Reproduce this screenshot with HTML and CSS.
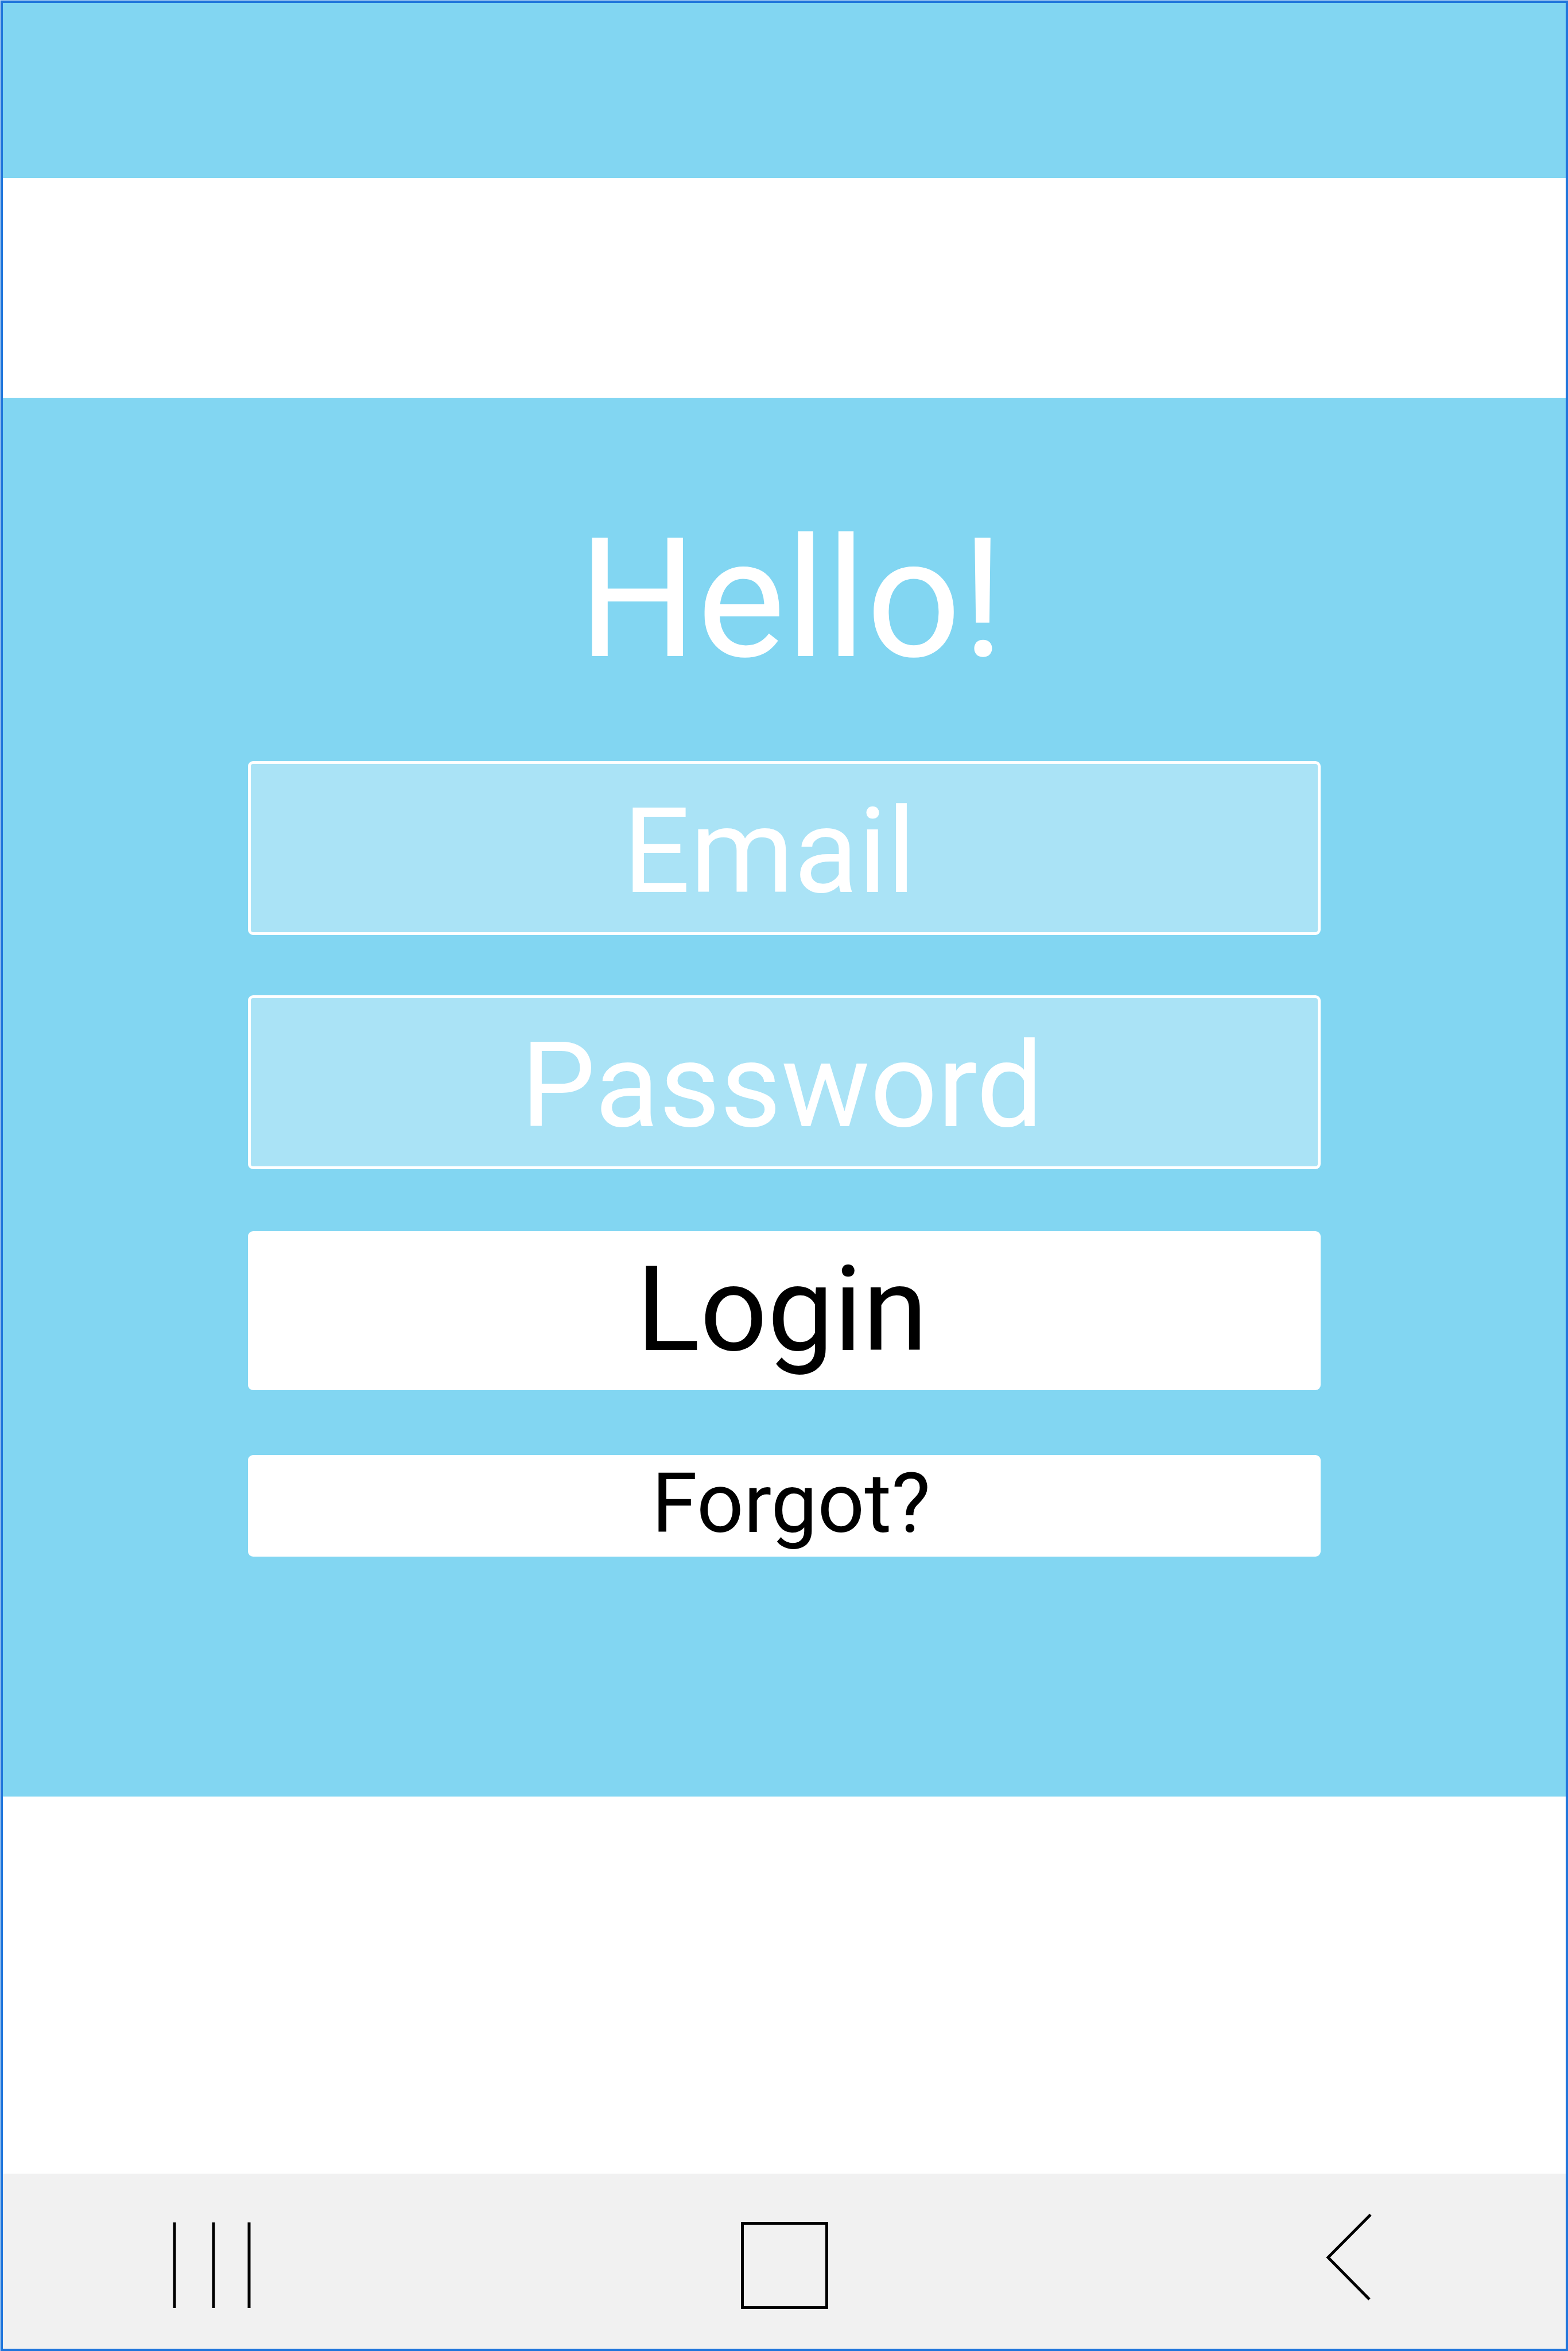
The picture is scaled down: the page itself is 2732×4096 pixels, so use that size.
FILE: index.html
```html
<!DOCTYPE html>
<html lang="en">
<head>
<meta charset="utf-8">
<meta name="viewport" content="width=device-width, initial-scale=1">
<title>Login</title>
<link rel="stylesheet" href="styles.css">
</head>
<body>
<div class="screen">
  <header class="top-bar"></header>
  <main class="panel">
    <h1 class="title">Hello!</h1>
    <form class="login-form">
      <div class="fields">
        <input class="field field-email" type="email" name="email" placeholder="Email" aria-label="Email">
        <input class="field field-password" type="password" name="password" placeholder="Password" aria-label="Password">
      </div>
      <div class="actions">
        <button class="action action-login" type="submit">Login</button>
        <button class="action action-forgot" type="button">Forgot?</button>
      </div>
    </form>
  </main>
  <nav class="nav-bar" aria-label="System">
    <button class="nav-button" type="button" aria-label="Recent apps">
      <svg class="nav-icon" viewBox="0 0 152 180"><path d="M11 22V171M79 22V171M141 22V171"/></svg>
    </button>
    <button class="nav-button" type="button" aria-label="Home">
      <svg class="nav-icon" viewBox="0 0 152 180"><rect x="2.5" y="23.5" width="147" height="147"/></svg>
    </button>
    <button class="nav-button" type="button" aria-label="Back">
      <svg class="nav-icon" viewBox="0 0 152 180"><path d="M100 8.5L26 83L98 156"/></svg>
    </button>
  </nav>
</div>
</body>
</html>
```
FILE: styles.css
```css
* {
  box-sizing: border-box;
}

body {
  margin: 0;
  border: solid #bcd8f6;
  border-width: 1px 0 0 1px;
  background: #fff;
  font-family: Roboto, "Open Sans", sans-serif;
  font-weight: 400;
}

.screen {
  display: flex;
  flex-direction: column;
  min-height: calc(100vh - 1px);
  border: 4px solid #1f75db;
}

.top-bar {
  height: 305px;
  margin-bottom: 383px;
  background: #82d6f2;
}

.panel {
  padding: 182px 427px 418px;
  background: #82d6f2;
}

.title {
  margin: 0 0 112px;
  padding-left: 24px;
  color: #fff;
  font-size: 290px;
  font-weight: inherit;
  line-height: 339px;
  text-align: center;
}

.login-form {
  display: flex;
  flex-direction: column;
  gap: 108px;
}

.fields {
  display: flex;
  flex-direction: column;
  gap: 105px;
}

.actions {
  display: flex;
  flex-direction: column;
  gap: 113px;
}

.field,
.action {
  display: block;
  width: 100%;
  border-radius: 9px;
  font-family: inherit;
  font-size: 206px;
  font-weight: inherit;
  text-align: center;
}

.field {
  height: 303px;
  padding: 12px 8px 0 0;
  border: 5px solid #fff;
  background: #aae3f6;
  color: #fff;
}

.field::placeholder {
  color: #fff;
  opacity: 1;
}

.field-email {
  padding-right: 52px;
}

.action {
  padding: 0 8px 4px 0;
  border: 0;
  background: #fff;
  color: #000;
}

.action-login {
  height: 277px;
}

.action-forgot {
  height: 177px;
  padding: 0 0 14px 24px;
  font-size: 144px;
}

.nav-bar {
  display: flex;
  justify-content: space-between;
  margin-top: auto;
  padding: 63px 288px 62px;
  background: #f1f1f1;
}

.nav-button {
  padding: 0;
  border: 0;
  background: none;
}

.nav-icon {
  display: block;
  width: 152px;
  height: 180px;
  fill: none;
  stroke: #000;
  stroke-width: 5px;
}
```
